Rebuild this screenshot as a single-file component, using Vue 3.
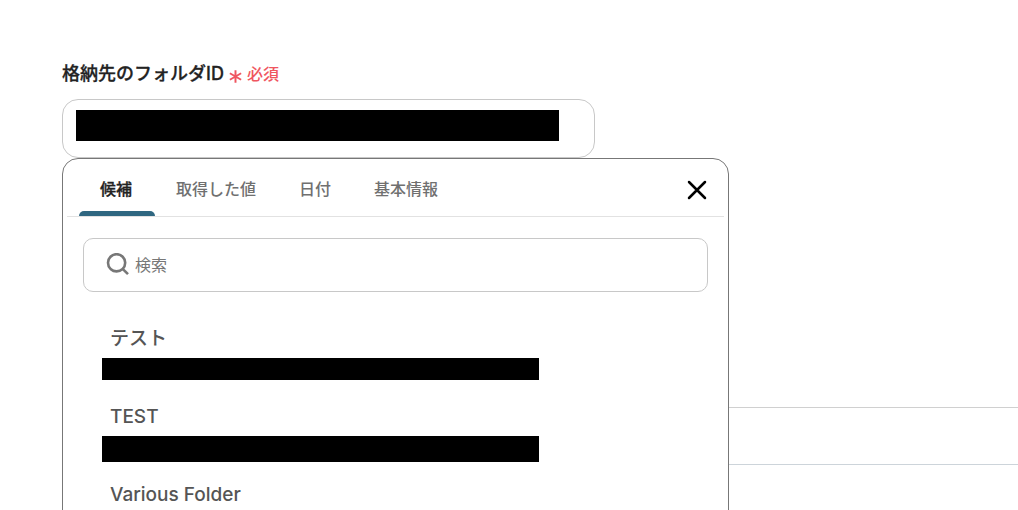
<script setup>
import { ref } from 'vue'

const tabs = ['候補', '取得した値', '日付', '基本情報']
const active = ref(0)
const query = ref('')
const folderId = ref('')
const folders = [
  { name: 'テスト', mask: 'short' },
  { name: 'TEST', mask: 'tall' },
  { name: 'Various Folder', mask: 'short' },
]
</script>

<template>
  <main class="page">
    <div class="field">
      <div class="label-row">
        <label class="label" for="folder-id">格納先のフォルダID</label>
        <span class="required">
          <svg class="asterisk" viewBox="0 0 12 12" aria-hidden="true">
            <path d="M6 0.3V11.7M0.8 3L11.2 9M11.2 3L0.8 9" />
          </svg>
          必須
        </span>
      </div>
      <div class="anchor">
        <div class="box">
          <input id="folder-id" v-model="folderId" class="box-input" type="text" />
          <span class="mask box-mask"></span>
        </div>

        <section class="panel">
          <header class="panel-head">
            <nav class="tabs" role="tablist">
              <button
                v-for="(tab, i) in tabs"
                :key="tab"
                type="button"
                role="tab"
                class="tab"
                :class="{ active: i === active }"
                :aria-selected="i === active"
                @click="active = i"
              >{{ tab }}</button>
            </nav>
            <button type="button" class="close" aria-label="閉じる">
              <svg viewBox="0 0 20 20" aria-hidden="true">
                <path d="M2 2L18 18M18 2L2 18" />
              </svg>
            </button>
          </header>

          <div class="search">
            <svg class="search-icon" viewBox="0 0 24 24" aria-hidden="true">
              <circle cx="10.6" cy="9.8" r="8.6" />
              <path d="M16.6 15.8L22 21.2" />
            </svg>
            <input v-model="query" class="search-input" type="text" placeholder="検索" aria-label="検索" />
          </div>

          <ul class="list">
            <li v-for="folder in folders" :key="folder.name" class="item">
              <button type="button" class="item-name">{{ folder.name }}</button>
              <span class="mask item-mask" :class="folder.mask"></span>
            </li>
          </ul>
        </section>
      </div>
    </div>
    <div class="next-row"></div>
  </main>
</template>

<style>
html,
body {
  margin: 0;
  background: #fff;
}
</style>

<style scoped>
.page {
  box-sizing: border-box;
  height: 100vh;
  overflow: hidden;
  padding: 60px 0 0 62px;
  font-family: Inter, "Noto Sans CJK JP", sans-serif;
  color: #222;
}
.field {
  max-width: 533px;
}
.label-row {
  display: flex;
  align-items: center;
  gap: 5px;
  height: 28px;
  margin-bottom: 11px;
}
.label {
  font-size: 18px;
  font-weight: 500;
  line-height: 28px;
  -webkit-text-stroke: 0.3px #222;
}
.required {
  display: flex;
  align-items: center;
  gap: 5px;
  font-size: 16px;
  line-height: 28px;
  font-weight: 500;
  color: #ef5660;
}
.asterisk {
  width: 13px;
  height: 13px;
  margin-top: 4px;
  fill: none;
  stroke: #ef5660;
  stroke-width: 1.8;
}
.anchor {
  position: relative;
}
.box {
  box-sizing: border-box;
  display: grid;
  align-items: center;
  height: 59px;
  padding: 0 35px 6px 13px;
  border: 1px solid #c8c8c8;
  border-radius: 16px;
}
.box-input,
.box-mask {
  grid-area: 1 / 1;
}
.box-input {
  min-width: 0;
  padding: 0;
  border: 0;
  outline: 0;
  font: inherit;
  font-size: 16px;
  background: transparent;
}
.mask {
  display: block;
  background: #000;
}
.box-mask {
  height: 31px;
}
.panel {
  position: absolute;
  z-index: 1;
  top: 100%;
  left: 0;
  box-sizing: border-box;
  width: 667px;
  min-height: 420px;
  border: 1px solid #777;
  border-radius: 16px;
  background: #fff;
}
.panel-head {
  display: flex;
  align-items: stretch;
  justify-content: space-between;
  height: 57px;
  margin: 0 4px;
  padding: 0 12px;
  border-bottom: 1px solid #e2e2e2;
}
.tabs {
  display: flex;
}
.tab {
  position: relative;
  padding: 1px 22px 0 21px;
  border: 0;
  background: none;
  font: inherit;
  font-size: 16px;
  font-weight: 500;
  color: #707070;
}
.tab.active {
  padding-right: 23px;
  color: #222;
  -webkit-text-stroke: 0.3px #222;
}
.tab.active::after {
  content: "";
  position: absolute;
  right: 0;
  bottom: 0;
  left: 0;
  height: 5px;
  border-radius: 5px 5px 0 0;
  background: #2f6781;
}
.close {
  display: flex;
  align-items: center;
  padding: 5px 5px 0;
  border: 0;
  background: none;
}
.close svg {
  width: 20px;
  height: 20px;
  fill: none;
  stroke: #000;
  stroke-width: 2.5;
  stroke-linecap: round;
}
.search {
  box-sizing: border-box;
  display: flex;
  align-items: center;
  gap: 5px;
  height: 54px;
  margin: 21px 20px 0;
  padding: 0 22px;
  border: 1px solid #c8c8c8;
  border-radius: 10px;
}
.search-icon {
  width: 24px;
  height: 24px;
  fill: none;
  stroke: #777;
  stroke-width: 2.6;
}
.search-input {
  flex: 1;
  min-width: 0;
  padding: 0;
  border: 0;
  outline: 0;
  background: none;
  font: inherit;
  font-size: 16px;
  line-height: 24px;
  color: #222;
}
.search-input::placeholder {
  color: #777;
  opacity: 1;
}
.list {
  margin: 33px 0 0;
  padding: 0 39px;
  list-style: none;
}
.item {
  height: 78px;
}
.item-name {
  display: block;
  height: 28px;
  margin-bottom: 5px;
  padding: 0 8px;
  border: 0;
  background: none;
  font: inherit;
  font-size: 19px;
  font-weight: 500;
  line-height: 28px;
  color: #555;
}
.item-mask {
  max-width: 437px;
}
.short {
  height: 22px;
}
.tall {
  height: 26px;
}
.next-row {
  height: 56px;
  margin-top: 249px;
  border-top: 1px solid #d0d0d0;
  border-bottom: 1px solid #cdd4da;
}
</style>
